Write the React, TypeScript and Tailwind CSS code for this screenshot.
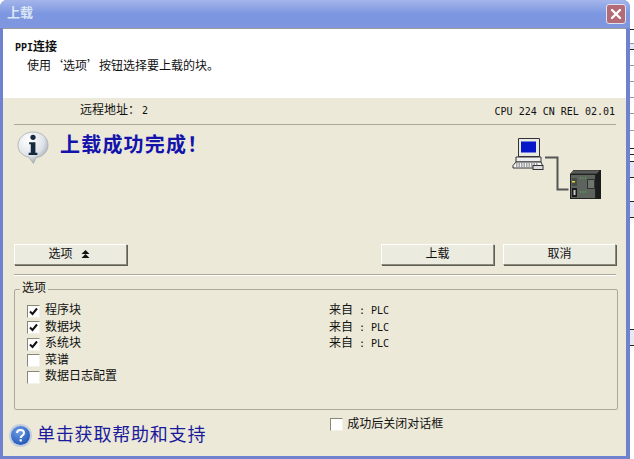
const cjk = "font-['Liberation_Mono','Noto_Sans_CJK_SC',monospace]";

function Latin({ children }: { children: string }) {
  return <span className="font-['DejaVu_Sans_Mono',monospace] text-[10px]">{children}</span>;
}

function Check({ checked = false }: { checked?: boolean }) {
  return (
    <span className="w-[13px] h-[13px] shrink-0 bg-white border-t border-l border-t-[#8a8778] border-l-[#8a8778] border-b border-r border-b-[#f4f2e8] border-r-[#f4f2e8] grid place-items-center">
      {checked && (
        <svg width="9" height="9" viewBox="0 0 9 9" fill="none" stroke="#111" strokeWidth="2">
          <path d="M1 4.500l2.500 2.500L8 1.500" />
        </svg>
      )}
    </span>
  );
}

function Btn({ label, width, arrow }: { label: string; width: string; arrow?: boolean }) {
  return (
    <button
      className={`${width} h-[21px] flex items-center justify-center gap-[8px] text-[12px] text-[#111] bg-[#ecebe0] border border-t-white border-l-white border-r-[#8d8b7c] border-b-[#8d8b7c] shadow-[1px_1px_0_#5f5e54] ${arrow ? "pr-[3px]" : ""}`}
    >
      {label}
      {arrow && (
        <svg width="9" height="9" viewBox="0 0 9 9" fill="#111">
          <path d="M4.500 0L8.500 4H.5zM4.500 4L8.500 8H.5z" />
        </svg>
      )}
    </button>
  );
}

const blocks = [
  { name: "程序块", on: true, from: true },
  { name: "数据块", on: true, from: true },
  { name: "系统块", on: true, from: true },
  { name: "菜谱", on: false, from: false },
  { name: "数据日志配置", on: false, from: false },
];

function InfoIcon() {
  return (
    <svg width="32" height="33" viewBox="0 0 33 34" className="shrink-0">
      <defs>
        <radialGradient id="bubble" cx="0.35" cy="0.25" r="0.85">
          <stop offset="0" stopColor="#ffffff" />
          <stop offset="0.6" stopColor="#dfe3e8" />
          <stop offset="1" stopColor="#8f98a3" />
        </radialGradient>
      </defs>
      <path d="M16.500 1C25.500 1 32 7 32 14.500S25.500 27 19.500 27.500L17 33.500L12 27C5.500 25.500 1 21 1 14.500S7.500 1 16.500 1z" fill="url(#bubble)" stroke="#a4abb3" strokeWidth="0.8" />
      <circle cx="16.500" cy="6.500" r="2.700" fill="#142a3e" />
      <path d="M12.500 11.500h6.500v11h2v2.300h-9v-2.300h2.200v-8.800h-1.700z" fill="#142a3e" />
    </svg>
  );
}

function HelpIcon() {
  return (
    <svg width="23" height="23" viewBox="0 0 23 23" className="shrink-0">
      <defs>
        <radialGradient id="help" cx="0.4" cy="0.3" r="0.8">
          <stop offset="0" stopColor="#6f9fe8" />
          <stop offset="1" stopColor="#1a4fb0" />
        </radialGradient>
      </defs>
      <circle cx="11.500" cy="11.500" r="11.500" fill="#c4cedf" />
      <circle cx="11.500" cy="11.500" r="9.500" fill="url(#help)" />
      <path d="M8 9c0-4 7-4 7 0 0 2.500-3.300 2.500-3.300 5" fill="none" stroke="#fff" strokeWidth="2" />
      <rect x="10.600" y="15.300" width="2.200" height="2.200" fill="#fff" />
    </svg>
  );
}

function LinkDiagram() {
  return (
    <svg width="90" height="62" viewBox="0 0 90 62" className="shrink-0">
      <path d="M33 20.500h12.500v32h11" fill="none" stroke="#555" strokeWidth="2" />
      <path d="M6.500 1.500h21v18h-21z" fill="#e9e9e4" stroke="#333" strokeWidth="1" />
      <rect x="9" y="4.500" width="15" height="11" fill="#0718c8" />
      <path d="M4 20h25v5H4z" fill="#eee" stroke="#333" strokeWidth="1" />
      <path d="M1 28.500l3-3.500h25l1.500 3.500-1 2.500H1z" fill="#f5f5f5" stroke="#333" strokeWidth="1" />
      <path d="M4 27h22M4 29h22" stroke="#555" strokeWidth="1" strokeDasharray="1.500 1" />
      <rect x="21" y="28.500" width="10" height="4" fill="#ddd" stroke="#333" strokeWidth="1" />
      <path d="M58 37l3.500-4h27.500v29H58z" fill="#1c1c1c" />
      <path d="M61.500 33.500h26l-3 3h-26z" fill="#6a6e6a" />
      <path d="M61.500 35h24" stroke="#222" strokeWidth="1" strokeDasharray="1 1" />
      <rect x="58.500" y="37.500" width="25" height="24" fill="#5d635d" stroke="#222" strokeWidth="1" />
      <rect x="60" y="41" width="5" height="8" fill="#454c45" />
      <rect x="60" y="44" width="3" height="1.500" fill="#e8d838" />
      <rect x="60" y="51" width="5" height="9" fill="#1a1a1a" />
      <rect x="61.500" y="53" width="2" height="5" fill="#c8c8c8" />
      <path d="M75.500 42.500h7v9h-7z" fill="#6e746e" stroke="#222" strokeWidth="0.8" />
      <path d="M68 41h7M68 55h7" stroke="#57c957" strokeWidth="1" strokeDasharray="1 1.500" />
    </svg>
  );
}

// 窗口右侧露出的背景表格线
const stripFills = [
  [43, 6],
  [161, 16],
  [201, 16],
  [329, 16],
];
const stripBlack = [29, 49, 148, 154, 161, 177, 201, 217, 329, 345];
const stripGray = [43, 65, 81, 97, 113, 130];

export default function App() {
  return (
    <div className={`w-[634px] h-[459px] overflow-hidden flex bg-white ${cjk} text-[12px] text-[#111]`}>
      <div className="w-[630px] h-full flex flex-col bg-[#6f82cf] rounded-t-[7px] overflow-hidden">
        <div className="h-[28px] shrink-0 flex items-center justify-between pl-[7px] pr-[4px] bg-gradient-to-b from-[#a4b5ea] via-[#7c96e0] to-[#7f97df]">
          <span className="text-[13px] font-bold text-[#dbe6f5]">上载</span>
          <span className="w-[20px] h-[20px] grid place-items-center rounded-[3px] bg-[#b46b78] border border-[#dfe3f0]">
            <svg width="12" height="12" viewBox="0 0 12 12" stroke="#fff" strokeWidth="2.400" strokeLinecap="round">
              <path d="M2 2l8 8M10 2L2 10" />
            </svg>
          </span>
        </div>

        <div className="flex-1 min-h-0 flex flex-col ml-[3px] mr-[4px] mb-[3px] border-t border-t-[#9a9aa0]">
          <div className="h-[69px] shrink-0 bg-white pl-[12px] pt-[11px]">
            <div className="font-bold leading-[16px]">
              <Latin>PPI</Latin>连接
            </div>
            <div className="ml-[12px] mt-[1px] leading-[16px]">
              使用<span className="font-['Noto_Sans_CJK_SC',sans-serif]">‘选项’</span>按钮选择要上载的块。
            </div>
          </div>

          <div className="flex-1 min-h-0 flex flex-col bg-[#ece9d8] pl-[11px] pr-[10px]">
            <div className="h-[27px] shrink-0 flex items-center justify-between border-b border-b-[#aaa99c] pl-[66px] pr-[1px]">
              <span>
                远程地址：<span className="ml-[2px]"><Latin>2</Latin></span>
              </span>
              <Latin>CPU 224 CN REL 02.01</Latin>
            </div>

            <div className="h-[119px] shrink-0 flex items-start pl-[3px] pt-[6px] pr-[14px]">
              <InfoIcon />
              <span className="ml-[11px] mt-[4px] text-[20px] leading-[24px] font-bold text-[#1414ac] tracking-[1.200px]">
                上载成功完成！
              </span>
              <div className="ml-auto mt-[6px]">
                <LinkDiagram />
              </div>
            </div>

            <div className="h-[21px] shrink-0 flex">
              <Btn label="选项" width="w-[113px]" arrow />
              <div className="ml-auto flex gap-[9px]">
                <Btn label="上载" width="w-[113px]" />
                <Btn label="取消" width="w-[113px]" />
              </div>
            </div>

            <div className="mt-[9px] h-[2px] shrink-0 border-t border-t-[#aca899] border-b border-b-white" />

            <fieldset className="mt-[6px] h-[128px] shrink-0 border border-[#aca899] rounded-[2px] pl-[12px] mr-[-2px]">
              <legend className="ml-[-7px] px-[2px] leading-[14px]">选项</legend>
              <div className="mt-[7px] flex flex-col">
                {blocks.map((b) => (
                  <div key={b.name} className="h-[16.500px] flex items-center">
                    <Check checked={b.on} />
                    <span className="ml-[5px] w-[284px]">{b.name}</span>
                    {b.from && (
                      <span className="whitespace-pre">
                        来自<Latin> : PLC</Latin>
                      </span>
                    )}
                  </div>
                ))}
              </div>
            </fieldset>

            <div className="flex-1 min-h-0 flex ml-[-5px] pt-[6px]">
              <div className="flex items-start pt-[8px]">
                <HelpIcon />
                <span className="ml-[5px] text-[18px] leading-[24px] text-[#1a1a9c] tracking-[0.800px]">单击获取帮助和支持</span>
              </div>
              <div className="ml-[124px] h-[16px] flex items-center pt-[1px]">
                <Check />
                <span className="ml-[4px]">成功后关闭对话框</span>
              </div>
            </div>
          </div>
        </div>
      </div>

      <svg width="4" height="459" className="shrink-0">
        {stripFills.map(([y, h]) => (
          <rect key={y} x="0" y={y} width="4" height={h} fill="#e8e8f6" />
        ))}
        {stripGray.map((y) => (
          <rect key={y} x="0" y={y} width="4" height="1" fill="#9a9aa6" />
        ))}
        {stripBlack.map((y) => (
          <rect key={y} x="0" y={y} width="4" height="1" fill="#222" />
        ))}
      </svg>
    </div>
  );
}
